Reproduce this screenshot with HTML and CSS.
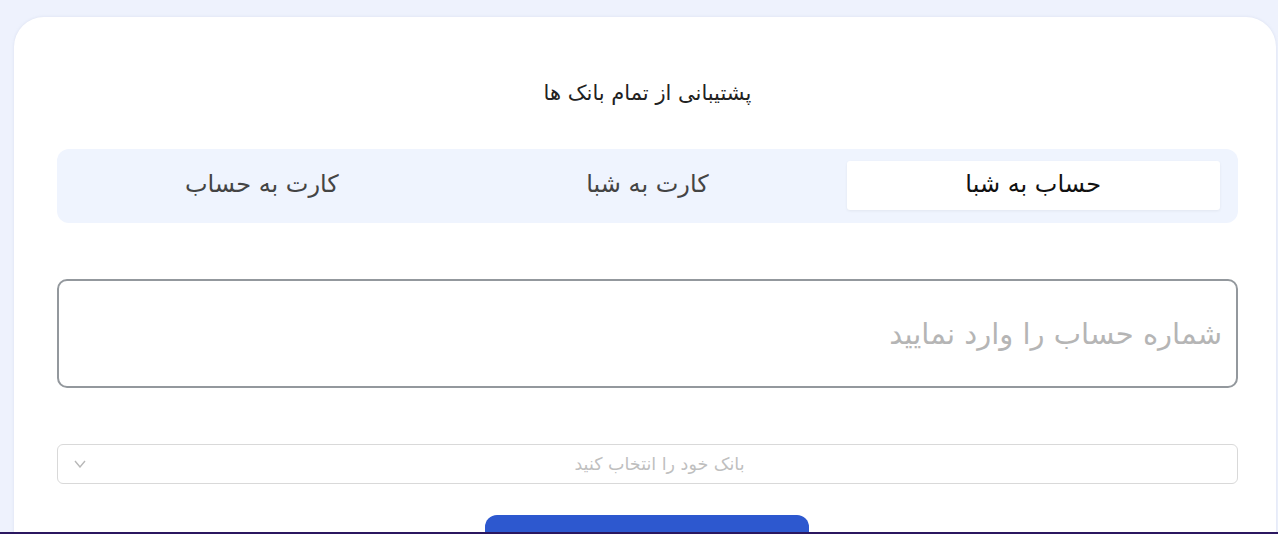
FILE: index.html
```html
<!DOCTYPE html>
<html lang="fa" dir="rtl">
<head>
    <meta charset="UTF-8">
    <meta name="viewport" content="width=device-width, initial-scale=1.0">
    <title>حساب به شبا</title>
    <link rel="stylesheet" href="styles.css">
</head>
<body>
    <div class="page">
        <div class="card">
            <h2 class="title">پشتیبانی از تمام بانک ها</h2>

            <div class="tabs">
                <a href="javascript:;" class="tab active">حساب به شبا</a>
                <a href="javascript:;" class="tab">کارت به شبا</a>
                <a href="javascript:;" class="tab">کارت به حساب</a>
            </div>

            <input class="field" type="text" placeholder="شماره حساب را وارد نمایید">

            <div class="select">
                <span class="select-text">بانک خود را انتخاب کنید</span>
                <svg class="chevron" width="12" height="8" viewBox="0 0 12 8">
                    <path d="M1 1 L6 7 L11 1" fill="none" stroke="#b8b8b8" stroke-width="1.4"/>
                </svg>
            </div>

            <div class="actions">
                <button class="btn"></button>
            </div>
        </div>
    </div>
    <div class="footer-line"></div>
</body>
</html>
```

FILE: styles.css
```css
*{
    margin: 0;
    padding: 0;
    box-sizing: border-box;
}
html, body {
    height: 534px;
    overflow: hidden;
}
body {
    background-color: #eef2fd;
    font-family: "DejaVu Sans", "Noto Sans", sans-serif;
    position: relative;
}
.page {
    padding: 17px 2px 0 14px;
}
.card {
    background-color: #fff;
    border-radius: 30px 30px 0 0;
    box-shadow: 0 0 3px rgba(180, 190, 215, 0.35);
    padding: 0 38px 0 43px;
    height: 517px;
    overflow: hidden;
}
.title {
    font-size: 21px;
    font-weight: normal;
    color: #222;
    text-align: center;
    padding-top: 61px;
    line-height: 30px;
}
.tabs {
    display: flex;
    margin-top: 41px;
    background-color: #eff4fe;
    border-radius: 12px;
    padding: 12px 12px 13px;
}
.tab {
    flex: 1;
    margin: 0 6.5px;
    height: 49px;
    line-height: 47px;
    text-align: center;
    font-size: 24px;
    color: #444;
    text-decoration: none;
    border-radius: 3px;
}
.tab.active {
    background-color: #fff;
    color: #111;
    box-shadow: 0 1px 3px rgba(0, 0, 0, 0.06);
}
.field {
    display: block;
    width: 100%;
    height: 109px;
    margin-top: 56px;
    border: 2px solid #93989d;
    border-radius: 10px;
    padding: 0 14px;
    font-family: "DejaVu Sans", sans-serif;
    font-size: 29px;
    outline: none;
    direction: rtl;
}
.field::placeholder {
    color: #b5b5b5;
}
.select {
    display: flex;
    align-items: center;
    justify-content: center;
    position: relative;
    height: 40px;
    margin-top: 56px;
    border: 1px solid #d9d9d9;
    border-radius: 6px;
}
.select-text {
    font-size: 17.5px;
    color: #bfbfbf;
    margin-right: -24px;
}
.chevron {
    position: absolute;
    left: 16px;
    top: 15px;
}
.actions {
    display: flex;
    justify-content: center;
    margin-top: 31px;
}
.btn {
    width: 324px;
    height: 48px;
    background-color: #2d58cf;
    border: none;
    border-radius: 12px;
    position: relative;
    left: -1px;
}
.footer-line {
    position: absolute;
    left: 0;
    right: 0;
    bottom: 0;
    height: 2px;
    background-color: #2b1760;
}
```
